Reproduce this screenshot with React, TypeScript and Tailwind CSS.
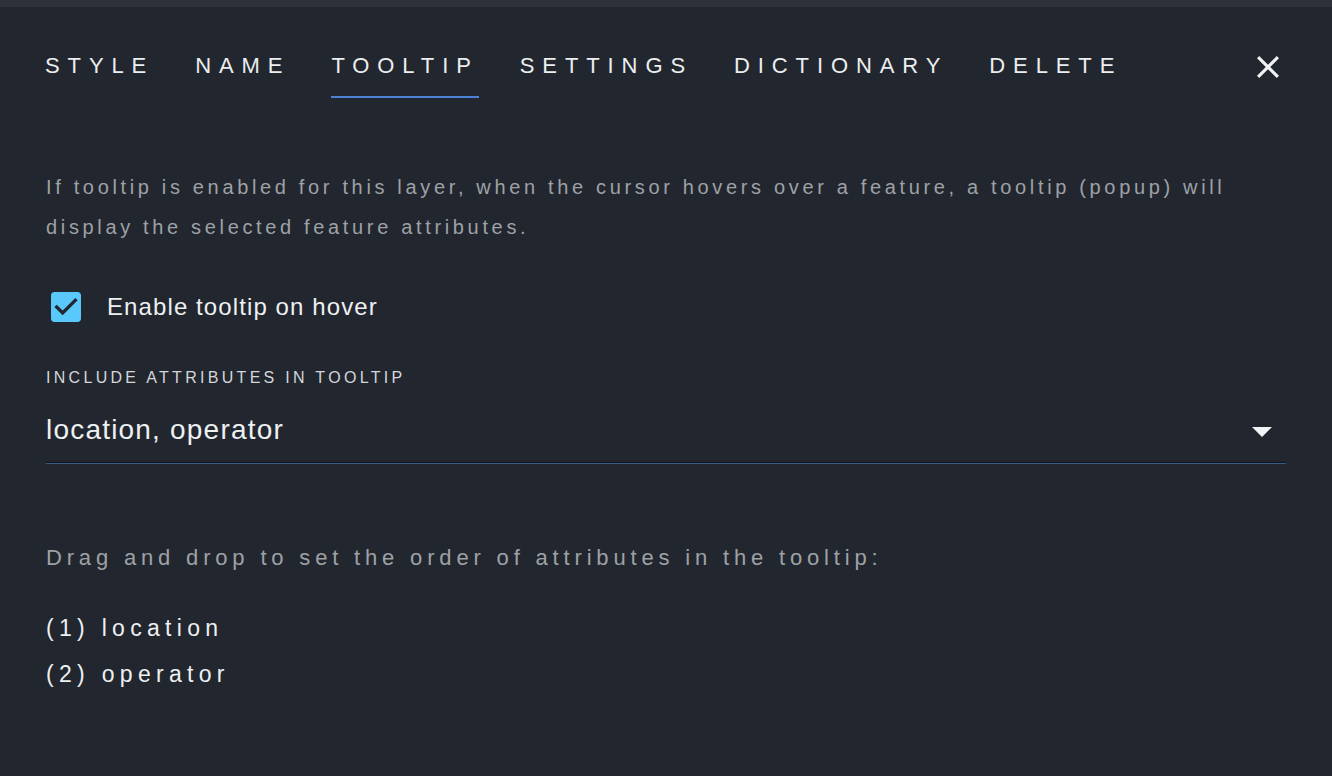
import React from "react"

const tabs = ["STYLE", "NAME", "TOOLTIP", "SETTINGS", "DICTIONARY", "DELETE"]

const App = () => {
    return (
        <div className="min-h-[776px] w-full bg-[#22272f] font-['Liberation_Sans',Arial,sans-serif] text-[#eceef0]">
            <div className="h-[7px] bg-[#2d313a]" />
            <div className="px-[46px]">
                {/* tabs */}
                <div className="flex items-start">
                    <div className="flex gap-[41px] -ml-[1px]">
                        {tabs.map((t) => (
                            <div
                                key={t}
                                className={
                                    t === "TOOLTIP"
                                        ? "pt-[48px] pb-[19px] border-b-2 border-[#4b82d6] text-[22px] leading-[22px] tracking-[7.9px]"
                                        : "pt-[48px] pb-[19px] border-b-2 border-transparent text-[22px] leading-[22px] tracking-[7.9px]"
                                }
                            >
                                {t}
                            </div>
                        ))}
                    </div>
                    <svg viewBox="5 5 14 14" className="ml-auto mr-[7px] mt-[49px] w-[22px] h-[22px]" fill="#f2f3f4">
                        <path d="M19 6.41L17.59 5 12 10.59 6.41 5 5 6.41 10.59 12 5 17.59 6.41 19 12 13.41 17.59 19 19 17.59 13.41 12z" />
                    </svg>
                </div>

                <p className="mt-[69px] text-[20px] leading-[40px] tracking-[3.66px] text-[#9ea1a6]">
                    If tooltip is enabled for this layer, when the cursor hovers over a feature, a tooltip (popup) will
                    display the selected feature attributes.
                </p>

                {/* checkbox */}
                <div className="mt-[45px] flex items-center h-[30px]">
                    <svg viewBox="3 3 18 18" className="ml-[5px] w-[30px] h-[30px]" fill="#5ac8fa">
                        <path d="M19 3H5c-1.11 0-2 .9-2 2v14c0 1.1.89 2 2 2h14c1.11 0 2-.9 2-2V5c0-1.1-.89-2-2-2zm-9 14l-5-5 1.41-1.41L10 14.17l7.59-7.59L19 8l-9 9z" />
                    </svg>
                    <span className="ml-[26px] text-[24px] leading-[24px] tracking-[1.1px] text-[#eef0f2]">
                        Enable tooltip on hover
                    </span>
                </div>

                {/* select */}
                <div className="mt-[48px] text-[16px] leading-[16px] tracking-[3.3px] text-[#d4d6d9]">
                    INCLUDE ATTRIBUTES IN TOOLTIP
                </div>
                <div className="mt-[30px] pb-[18px] flex items-center">
                    <span className="text-[28px] leading-[28px] tracking-[1.2px] text-[#eef0f2]">location, operator</span>
                    <svg viewBox="0 0 20 10" className="ml-auto mr-[14px] mt-[4px] w-[20px] h-[10px]" fill="#f2f3f4">
                        <polygon points="0,0 20,0 10,10" />
                    </svg>
                </div>
                <div className="h-px bg-[#10151c]" />
                <div className="h-px bg-[#3a5b88]" />

                <p className="mt-[83px] text-[22px] leading-[22px] tracking-[4.83px] text-[#9ea1a6]">
                    Drag and drop to set the order of attributes in the tooltip:
                </p>

                <div className="mt-[48px] flex flex-col gap-[23px] text-[23px] leading-[23px] tracking-[5.3px] text-[#eef0f2]">
                    <div>(1) location</div>
                    <div>(2) operator</div>
                </div>
            </div>
        </div>
    )
}

export default App
